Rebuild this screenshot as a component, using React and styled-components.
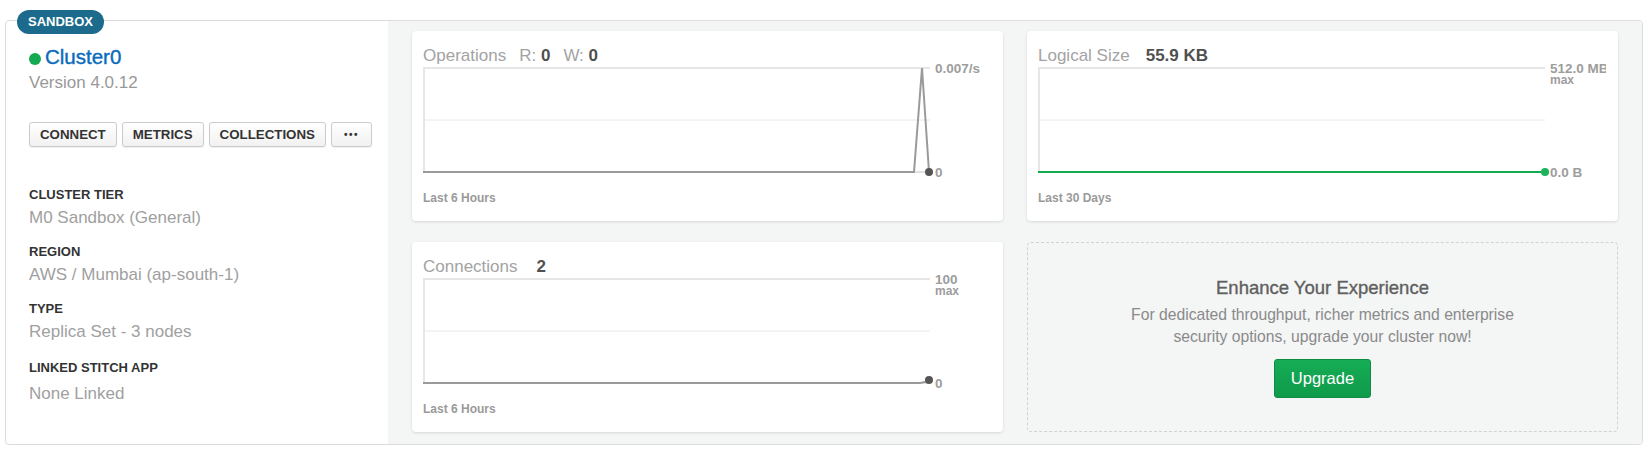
import React from 'react';
import styled, { createGlobalStyle } from 'styled-components';

const GlobalStyle = createGlobalStyle`
    body {
        margin: 0;
        background: #fff;
        font-family: "Liberation Sans", Arial, sans-serif;
    }
`;

const charts = [
    {
        key: 'ops',
        title: 'Operations',
        stats: [
            { label: 'R:', value: '0' },
            { label: 'W:', value: '0' },
        ],
        gap: 13,
        top: '0.007/s',
        bottom: '0',
        footer: 'Last 6 Hours',
        line: 'M0 105 H491 L499 1 L506 105',
        dot: [506, 105],
        color: '#9a9a9a',
        dotColor: '#555',
    },
    {
        key: 'size',
        title: 'Logical Size',
        stats: [{ value: '55.9 KB' }],
        gap: 16,
        top: '512.0 MB',
        max: true,
        bottom: '0.0 B',
        footer: 'Last 30 Days',
        line: 'M0 105 H507',
        dot: [507, 105],
        color: '#13aa52',
        dotColor: '#1cb35b',
    },
    {
        key: 'conn',
        title: 'Connections',
        stats: [{ value: '2' }],
        gap: 19,
        top: '100',
        max: true,
        bottom: '0',
        footer: 'Last 6 Hours',
        line: 'M0 105 H497 Q501 105 506 102',
        dot: [506, 102],
        color: '#9a9a9a',
        dotColor: '#555',
    },
];

const details = [
    { label: 'CLUSTER TIER', value: 'M0 Sandbox (General)' },
    { label: 'REGION', value: 'AWS / Mumbai (ap-south-1)' },
    { label: 'TYPE', value: 'Replica Set - 3 nodes' },
    { label: 'LINKED STITCH APP', value: 'None Linked', link: true },
];

function Chart({ data }) {
    return (
        <ChartCard>
            <ChartTitle>
                {data.title}
                {data.stats.map((s, i) => (
                    <Stat key={i} $gap={data.gap}>
                        {s.label && <>{s.label} </>}
                        <b>{s.value}</b>
                    </Stat>
                ))}
            </ChartTitle>
            <Plot>
                <svg width="100%" height="110" overflow="visible">
                    <line x1="0" y1="1" x2="507" y2="1" stroke="#e6e6e6" strokeWidth="2" />
                    <line x1="1" y1="0" x2="1" y2="105" stroke="#e6e6e6" strokeWidth="2" />
                    <line x1="1" y1="53" x2="507" y2="53" stroke="#e8e8e8" strokeWidth="1" />
                    <line x1="0" y1="105" x2="506" y2="105" stroke="#e2e2e2" strokeWidth="2" />
                    <path d={data.line} fill="none" stroke={data.color} strokeWidth="2" />
                    <circle cx={data.dot[0]} cy={data.dot[1]} r="4" fill={data.dotColor} />
                    <AxisText x="512" y="6">{data.top}</AxisText>
                    {data.max && (
                        <AxisText x="512" y="17" $small>max</AxisText>
                    )}
                    <AxisText x="512" y="110">{data.bottom}</AxisText>
                </svg>
            </Plot>
            <Footer>{data.footer}</Footer>
        </ChartCard>
    );
}

function App() {
    return (
        <Page>
            <GlobalStyle />
            <ClusterCard>
                <Badge>SANDBOX</Badge>

                <Summary>
                    <ClusterName>
                        <StatusDot />
                        Cluster0
                    </ClusterName>
                    <Version>Version 4.0.12</Version>

                    <Actions>
                        <ActionButton>CONNECT</ActionButton>
                        <ActionButton>METRICS</ActionButton>
                        <ActionButton>COLLECTIONS</ActionButton>
                        <ActionButton $dots>•••</ActionButton>
                    </Actions>

                    <Details>
                        {details.map((d) => (
                            <DetailGroup key={d.label} $link={d.link}>
                                <Label>{d.label}</Label>
                                <Value $link={d.link}>{d.value}</Value>
                            </DetailGroup>
                        ))}
                    </Details>
                </Summary>

                <Metrics>
                    {charts.map((c) => (
                        <Chart key={c.key} data={c} />
                    ))}
                    <Promo>
                        <PromoTitle>Enhance Your Experience</PromoTitle>
                        <PromoText>
                            For dedicated throughput, richer metrics and enterprise
                            <br />
                            security options, upgrade your cluster now!
                        </PromoText>
                        <UpgradeButton>Upgrade</UpgradeButton>
                    </Promo>
                </Metrics>
            </ClusterCard>
        </Page>
    );
}

const Page = styled.div`
    padding: 20px 9px 0 5px;
`;

const ClusterCard = styled.div`
    position: relative;
    display: flex;
    height: 425px;
    box-sizing: border-box;
    border: 1px solid #dcdcdc;
    border-radius: 4px;
    background: #fff;
`;

const Badge = styled.span`
    position: absolute;
    top: -11px;
    left: 11px;
    height: 24px;
    line-height: 24px;
    padding: 0 11px;
    border-radius: 12px;
    background: #1c6b8c;
    color: #fff;
    font-size: 13px;
    font-weight: bold;
`;

const Summary = styled.div`
    width: 382px;
    flex-shrink: 0;
    box-sizing: border-box;
    padding: 24px 0 0 23px;
`;

const ClusterName = styled.div`
    display: flex;
    align-items: center;
    font-size: 20.5px;
    line-height: 24px;
    color: #0b6bbd;
    -webkit-text-stroke: 0.4px #0b6bbd;
`;

const StatusDot = styled.span`
    width: 12px;
    height: 12px;
    margin: 3px 4px 0 0;
    border-radius: 50%;
    background: #13aa52;
`;

const Version = styled.div`
    margin-top: 4px;
    font-size: 17px;
    line-height: 20px;
    color: #999;
`;

const Actions = styled.div`
    display: flex;
    gap: 5px;
    margin-top: 29px;
`;

const ActionButton = styled.button`
    height: 25px;
    padding: ${(p) => (p.$dots ? '0 12px' : '0 10px')};
    border: 1px solid #cbcbcb;
    border-radius: 3px;
    background: linear-gradient(#fff, #f1f1f1);
    box-shadow: 0 1px 1px rgba(0, 0, 0, 0.06);
    color: #333;
    font-family: "Liberation Sans", Arial, sans-serif;
    font-size: ${(p) => (p.$dots ? '10px' : '13.3px')};
    letter-spacing: ${(p) => (p.$dots ? '1.5px' : '0')};
    font-weight: bold;
`;

const Details = styled.div`
    display: flex;
    flex-direction: column;
    gap: 15px;
    margin-top: 39px;
`;

const DetailGroup = styled.div`
    margin-top: ${(p) => (p.$link ? '2px' : '0')};
`;

const Label = styled.div`
    font-size: 13px;
    line-height: 18px;
    font-weight: bold;
    color: #333;
`;

const Value = styled.div`
    margin-top: ${(p) => (p.$link ? '7px' : '4px')};
    font-size: 17px;
    line-height: 20px;
    color: #a0a0a0;
`;

const Metrics = styled.div`
    flex: 1;
    display: grid;
    grid-template-columns: 1fr 1fr;
    grid-template-rows: 190px 190px;
    gap: 21px 24px;
    padding: 10px 24px 12px;
    background: #f4f5f5;
    border-radius: 0 3px 3px 0;
`;

const ChartCard = styled.div`
    min-width: 0;
    padding: 15px 12px 0 11px;
    background: #fff;
    border-radius: 4px;
    box-shadow: 0 1px 3px rgba(0, 0, 0, 0.12);
`;

const ChartTitle = styled.div`
    margin-bottom: 1px;
    font-size: 17px;
    line-height: 20px;
    color: #a3a3a3;
`;

const Stat = styled.span`
    margin-left: ${(p) => p.$gap}px;

    b {
        color: #505050;
    }
`;

const Plot = styled.div`
    overflow-x: clip;
    overflow-y: visible;

    svg {
        display: block;
    }
`;

const AxisText = styled.text`
    font-family: "Liberation Sans", Arial, sans-serif;
    font-size: ${(p) => (p.$small ? '12px' : '13.5px')};
    font-weight: bold;
    fill: #9d9d9d;
`;

const Footer = styled.div`
    margin-top: 13px;
    font-size: 12px;
    line-height: 16px;
    font-weight: bold;
    color: #9a9a9a;
`;

const Promo = styled.div`
    display: flex;
    flex-direction: column;
    align-items: center;
    justify-content: center;
    border: 1px dashed #d2d2d2;
    border-radius: 4px;
    text-align: center;
`;

const PromoTitle = styled.div`
    font-size: 18.5px;
    line-height: 22px;
    color: #5f5f5f;
    -webkit-text-stroke: 0.35px #5f5f5f;
`;

const PromoText = styled.div`
    margin-top: 5px;
    font-size: 15.7px;
    line-height: 22px;
    color: #8a8a8a;
`;

const UpgradeButton = styled.button`
    height: 39px;
    margin-top: 11px;
    padding: 0 16px;
    border: 1px solid #0d8c43;
    border-radius: 3px;
    background: linear-gradient(#16ad56, #0f9a4a);
    color: #fff;
    font-family: "Liberation Sans", Arial, sans-serif;
    font-size: 16.5px;
`;

export default App;
